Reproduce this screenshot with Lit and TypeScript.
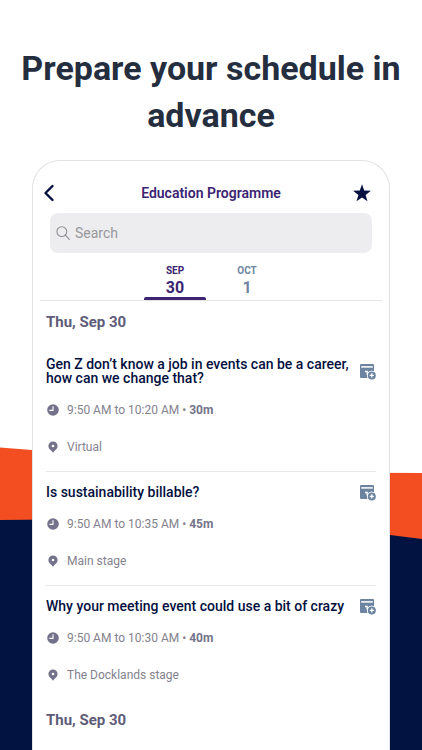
import { LitElement, html, css, svg } from "lit";
import { customElement, property, state } from "lit/decorators.js";
import { classMap } from "lit/directives/class-map.js";

interface Session {
  title: string;
  start: string;
  end: string;
  length: string;
  place: string;
}

const SESSIONS: Session[] = [
  {
    title: "Gen Z don’t know a job in events can be a career, how can we change that?",
    start: "9:50 AM",
    end: "10:20 AM",
    length: "30m",
    place: "Virtual",
  },
  {
    title: "Is sustainability billable?",
    start: "9:50 AM",
    end: "10:35 AM",
    length: "45m",
    place: "Main stage",
  },
  {
    title: "Why your meeting event could use a bit of crazy",
    start: "9:50 AM",
    end: "10:30 AM",
    length: "40m",
    place: "The Docklands stage",
  },
];

const DAYS = [
  { month: "SEP", day: "30" },
  { month: "OCT", day: "1" },
];

const clockIcon = svg`<svg class="icon" viewBox="-1 -1 14 14" width="14" height="14" aria-hidden="true">
  <circle cx="6" cy="6" r="5.8" fill="currentColor"/>
  <path d="M6 2.2V6.4H2.4" fill="none" stroke="#fff" stroke-width="1.1"/>
</svg>`;

const pinIcon = svg`<svg class="icon" viewBox="-1 -1 14 14" width="14" height="14" aria-hidden="true">
  <path d="M6 0.4a4.6 4.6 0 0 1 4.6 4.6c0 2.6-1.9 3.8-3.2 4.9L6 11.8 4.6 9.9C3.3 8.8 1.4 7.6 1.4 5A4.6 4.6 0 0 1 6 .4z" fill="currentColor"/>
  <circle cx="6" cy="5" r="1.3" fill="#fff"/>
</svg>`;

@customElement("session-item")
export class SessionItem extends LitElement {
  @property({ attribute: false }) session!: Session;

  static styles = css`
    :host {
      display: block;
      padding: 13px 0 16px;
    }
    .head {
      display: flex;
      align-items: center;
      justify-content: space-between;
      gap: 8px;
    }
    .title {
      margin: 0;
      font-size: 14px;
      line-height: 14px;
      font-weight: 500;
      color: #04103f;
    }
    .add {
      flex: none;
      display: block;
      height: 14px;
      padding: 0;
      border: 0;
      background: none;
      color: #6c84a0;
      cursor: pointer;
    }
    .add svg {
      display: block;
      overflow: visible;
    }
    .line {
      display: flex;
      align-items: center;
      gap: 7px;
      margin: 17px 0 0;
      font-size: 12px;
      line-height: 16px;
      color: #84828e;
    }
    .place {
      margin-top: 21px;
    }
    .icon {
      flex: none;
      color: #74728a;
    }
    b {
      font-weight: 700;
      color: #74728a;
    }
  `;

  render() {
    const s = this.session;
    return html`
      <div class="head">
        <h3 class="title">${s.title}</h3>
        <button class="add" aria-label="Add to my schedule">
          <svg viewBox="0 0 16 16" width="16" height="16">
            <path d="M1 0h12a1 1 0 0 1 1 1V7.500a4.600 4.600 0 0 0-6.200 6.500H1a1 1 0 0 1-1-1V1a1 1 0 0 1 1-1z" fill="currentColor"/>
            <path d="M1.200 2.900h11.600" stroke="#fff" stroke-width="1.500"/>
            <path d="M5 7.500h2.800M7.200 7v3.500" stroke="#fff" stroke-width="1.300" fill="none"/>
            <circle cx="11.800" cy="11.400" r="4.700" fill="#fff"/>
            <circle cx="11.800" cy="11.400" r="4" fill="currentColor"/>
            <path d="M11.800 9.300v4.200M9.700 11.400h4.200" stroke="#fff" stroke-width="1.300"/>
          </svg>
        </button>
      </div>
      <p class="line">${clockIcon}<span>${s.start} to ${s.end} • <b>${s.length}</b></span></p>
      <p class="line place">${pinIcon}<span>${s.place}</span></p>
    `;
  }
}

@customElement("app-root")
export class AppRoot extends LitElement {
  @state() private selected = 0;

  static styles = css`
    :host {
      display: flex;
      flex-direction: column;
      position: relative;
      box-sizing: border-box;
      min-height: 100vh;
      padding: 45px 0 0;
      background: #fff;
      font-family: Roboto, "Noto Sans", sans-serif;
    }
    .backdrop {
      position: absolute;
      inset: 0;
      width: 100%;
      height: 100%;
    }
    .headline {
      position: relative;
      margin: 0 12px 21px;
      text-align: center;
      font-size: 34px;
      line-height: 47px;
      font-weight: 700;
      color: #252e3f;
    }
    .card {
      position: relative;
      flex: 1;
      margin: 0 32px;
      border: 1px solid #e2e2e6;
      border-bottom: 0;
      border-radius: 28px 28px 0 0;
      background: #fff;
    }
    .bar {
      display: grid;
      grid-template-columns: 1fr auto 1fr;
      align-items: center;
      height: 20px;
      padding: 22px 10px 10px;
    }
    .bar h2 {
      margin: 0;
      font-size: 14px;
      line-height: 20px;
      font-weight: 600;
      color: #3b2573;
    }
    .tool {
      display: block;
      justify-self: start;
      padding: 0;
      border: 0;
      background: none;
      cursor: pointer;
    }
    .star {
      justify-self: end;
      padding-right: 8px;
    }
    .tool svg {
      display: block;
    }
    .search {
      display: flex;
      align-items: center;
      gap: 5px;
      height: 40px;
      margin: 0 17px;
      padding: 0 6px;
      border-radius: 8px;
      background: #ededef;
    }
    .search input {
      flex: 1;
      min-width: 0;
      padding: 0;
      border: 0;
      outline: 0;
      background: none;
      font: 14px/20px Roboto, "Noto Sans", sans-serif;
      color: #333;
    }
    .search input::placeholder {
      color: #97979b;
      opacity: 1;
    }
    .tabs {
      display: flex;
      justify-content: center;
      gap: 10px;
      margin: 0 7px;
      padding-top: 11px;
      border-bottom: 1px solid #e4e4e8;
    }
    .tab {
      width: 62px;
      padding: 0;
      border: 0;
      background: none;
      font-family: inherit;
      font-weight: 700;
      color: #6f86a3;
      cursor: pointer;
    }
    .tab::after {
      content: "";
      display: block;
      height: 3px;
      border-radius: 2px 2px 0 0;
    }
    .tab.on {
      color: #3b2573;
    }
    .tab.on::after {
      background: #3b2573;
    }
    .month,
    .day {
      display: block;
    }
    .month {
      font-size: 10px;
      line-height: 14px;
    }
    .day {
      font-size: 16px;
      line-height: 19px;
    }
    .list {
      padding: 0 13px;
    }
    .date {
      margin: 0;
      padding: 11px 0 12px;
      font-size: 15px;
      line-height: 20px;
      font-weight: 700;
      color: #5e5c78;
    }
    session-item + session-item {
      border-top: 1px solid #e8e8ec;
    }
  `;

  render() {
    return html`
      <svg class="backdrop" viewBox="0 0 422 750" preserveAspectRatio="none" aria-hidden="true">
        <path d="M0 447.500L32 450L211 472L422 473V560H0z" fill="#f24e22"/>
        <path d="M0 520L211 518L390 535L422 539V750H0z" fill="#021342"/>
      </svg>
      <h1 class="headline">Prepare your schedule in advance</h1>
      <main class="card">
        <header class="bar">
          <button class="tool" aria-label="Back">
            <svg viewBox="0 0 12 18" width="12" height="18">
              <path d="M9.500 2L2.500 9L9.500 16" fill="none" stroke="#04103f" stroke-width="2.400" stroke-linecap="round" stroke-linejoin="round"/>
            </svg>
          </button>
          <h2>Education Programme</h2>
          <button class="tool star" aria-label="Favourites">
            <svg viewBox="0 0 18 18" width="18" height="18">
              <path d="M9 0.300L11.200 6.600L17.900 6.800L12.600 10.900L14.500 17.300L9 13.500L3.500 17.300L5.400 10.900L.1 6.800L6.800 6.600z" fill="#04103f"/>
            </svg>
          </button>
        </header>
        <label class="search">
          <svg viewBox="0 0 14 14" width="14" height="14" aria-hidden="true">
            <circle cx="5.800" cy="5.600" r="4.900" fill="none" stroke="#8e8e93" stroke-width="1.100"/>
            <path d="M9.300 9.200L13.300 13.300" stroke="#8e8e93" stroke-width="1.200" stroke-linecap="round"/>
          </svg>
          <input type="search" placeholder="Search" aria-label="Search" />
        </label>
        <nav class="tabs">
          ${DAYS.map(
            (d, i) => html`<button
              class=${classMap({ tab: true, on: i === this.selected })}
              @click=${() => (this.selected = i)}
            >
              <span class="month">${d.month}</span><span class="day">${d.day}</span>
            </button>`
          )}
        </nav>
        <section class="list">
          <h2 class="date">Thu, Sep 30</h2>
          ${SESSIONS.map((s) => html`<session-item .session=${s}></session-item>`)}
          <h2 class="date">Thu, Sep 30</h2>
        </section>
      </main>
    `;
  }
}
